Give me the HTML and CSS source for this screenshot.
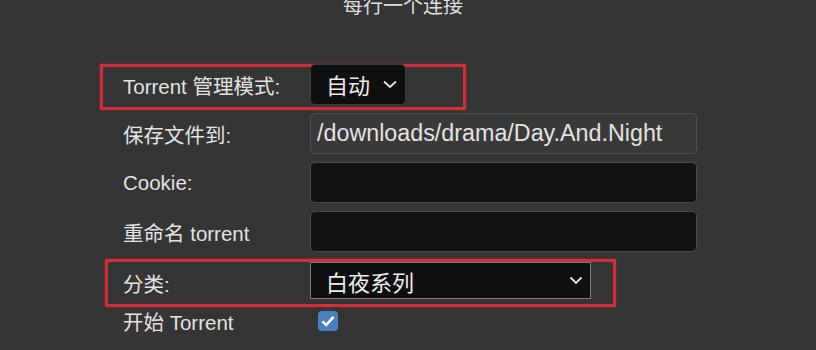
FILE: index.html
```html
<!DOCTYPE html>
<html lang="zh-CN">
<head>
  <meta charset="UTF-8" />
  <meta name="viewport" content="width=device-width, initial-scale=1.0"/>
  <title>添加 Torrent</title>
  <link rel="stylesheet" href="styles.css">
</head>
<body>
  <p class="hint">每行一个连接</p>

  <form class="torrent-form">
    <div class="row marked marked-mode">
      <label class="row-label">Torrent 管理模式:</label>
      <div class="select select-mode">
        <span>自动</span>
        <svg width="16" height="10" viewBox="0 0 16 10"><path d="M2 2.5 L8 8 L14 2.5" fill="none" stroke="#e6e6e6" stroke-width="1.7"/></svg>
      </div>
    </div>

    <div class="row">
      <label class="row-label">保存文件到:</label>
      <input class="field field-soft" type="text" value="/downloads/drama/Day.And.Night" />
    </div>

    <div class="row">
      <label class="row-label">Cookie:</label>
      <input class="field" type="text" />
    </div>

    <div class="row">
      <label class="row-label">重命名 torrent</label>
      <input class="field" type="text" />
    </div>

    <div class="row marked marked-category">
      <label class="row-label">分类:</label>
      <div class="select select-category">
        <span>白夜系列</span>
        <svg width="14" height="9" viewBox="0 0 14 9"><path d="M1.5 1.5 L7 7 L12.5 1.5" fill="none" stroke="#e6e6e6" stroke-width="1.8"/></svg>
      </div>
    </div>

    <div class="row row-check">
      <label class="row-label">开始 Torrent</label>
      <span class="checkbox" role="checkbox" aria-checked="true">
        <svg width="14" height="12" viewBox="0 0 14 12"><path d="M1.5 6.5 L5.2 10 L12.5 1.8" fill="none" stroke="#fff" stroke-width="2.6"/></svg>
      </span>
    </div>
  </form>
</body>
</html>
```

FILE: styles.css
```css
/* Basic reset */
* {
  margin: 0;
  padding: 0;
  box-sizing: border-box;
}

body {
  font-family: 'Liberation Sans', 'Noto Sans CJK SC', sans-serif;
  background-color: #353535;
  color: #e2e2e2;
  overflow: hidden;
}

.hint {
  text-align: center;
  font-size: 20px;
  line-height: 24px;
  margin-top: -6px;
  padding-right: 10px;
  color: #dedede;
}

.torrent-form {
  margin-top: 46px;
}

.row {
  display: flex;
  align-items: center;
  margin-left: 100px;
  padding-left: 23px;
  height: 41px;
  margin-top: 8px;
}

.row-label {
  width: 187px;
  flex-shrink: 0;
  font-size: 20.5px;
  color: #e2e2e2;
}

/* red annotation boxes */
.marked {
  border: 3px solid #d12d3a;
  box-shadow: 0 0 2px rgba(209, 45, 58, 0.6);
}

.marked-mode {
  margin-top: 0;
  width: 366px;
  height: 46px;
  padding-left: 20px;
  padding-bottom: 4px;
}

.marked-category {
  margin-top: 7px;
  margin-left: 105px;
  width: 511px;
  height: 48px;
  padding-left: 15px;
}

.marked-mode + .row {
  margin-top: 3px;
}

.field {
  width: 387px;
  height: 41px;
  background-color: #111;
  border: 1px solid #4a4a4a;
  border-radius: 5px;
  color: #e2e2e2;
  font-family: 'Liberation Sans', sans-serif;
  font-size: 23.3px;
  padding-left: 6px;
  outline: none;
}

.field-soft {
  background-color: #393939;
  border-color: #505050;
}

.select {
  display: flex;
  align-items: center;
  justify-content: space-between;
  background-color: #0f0f0f;
  color: #ececec;
  font-size: 22px;
}

.select-mode {
  width: 96px;
  height: 41px;
  padding: 0 7px 0 15px;
  border: 1px solid #3c3c3c;
  border-radius: 5px;
  margin-top: -2px;
}

.select-category {
  width: 281px;
  height: 37px;
  padding: 0 7px 0 15px;
  border: 1px solid #7a7a7a;
  align-self: flex-start;
}

.row-check {
  margin-top: 3px;
  height: 22px;
}

.checkbox {
  width: 20px;
  height: 20px;
  margin-left: 8px;
  background-color: #4a7fc0;
  border-radius: 4px;
  display: flex;
  align-items: center;
  justify-content: center;
}
```
